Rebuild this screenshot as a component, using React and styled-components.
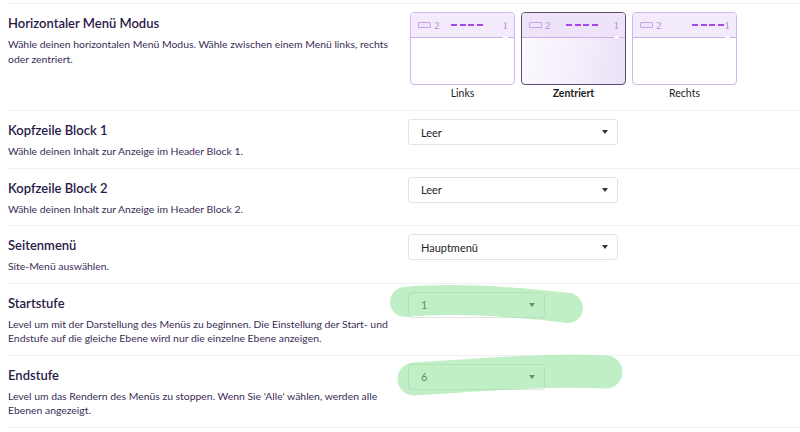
import React from 'react';
import styled, { createGlobalStyle } from 'styled-components';

const GlobalStyle = createGlobalStyle`
  body {
    margin: 0;
    background: #ffffff;
    font-family: 'Lato', 'Noto Sans', sans-serif;
  }
`;

const Page = styled.div`
  padding: 3px 0 0 8px;
`;

const Row = styled.div`
  display: grid;
  grid-template-columns: 400px 1fr;
  border-top: 1px solid #efefef;
  padding: 10px 0 ${(p) => p.$bottom || 9}px;

  &:last-child {
    border-bottom: 1px solid #efefef;
  }
`;

const Info = styled.div`
  display: flex;
  flex-direction: column;
`;

const Title = styled.div`
  font-size: 13px;
  line-height: 18px;
  font-weight: 600;
  color: #2a1a48;
`;

const Desc = styled.div`
  margin-top: 5px;
  font-size: 10.4px;
  line-height: 14.5px;
  color: #3a2c56;
`;

const Control = styled.div`
  position: relative;
  margin-top: -2px;
`;

const Select = styled.div`
  box-sizing: border-box;
  width: ${(p) => p.$width}px;
  height: 26px;
  border: 1px solid #e3e3e3;
  border-radius: 3px;
  display: flex;
  align-items: center;
  justify-content: space-between;
  padding: 0 9px 0 12px;
  font-size: 11px;
  color: #1e1e1e;
`;

const Caret = styled.span`
  width: 0;
  height: 0;
  border-left: 3.5px solid transparent;
  border-right: 3.5px solid transparent;
  border-top: 4px solid #333333;
`;

const Cards = styled.div`
  display: flex;
  gap: 6px;
  margin-left: 2px;
`;

const Option = styled.div`
  display: flex;
  flex-direction: column;
  align-items: center;
  width: 105px;
`;

const Card = styled.div`
  box-sizing: border-box;
  width: 105px;
  height: 73px;
  border: ${(p) => (p.$active ? '1.5px solid #5e4d70' : '1px solid #d2b6ee')};
  border-radius: 4px;
  overflow: hidden;
  display: flex;
  flex-direction: column;
  background: ${(p) =>
    p.$active ? 'linear-gradient(100deg, #fcfaff 0%, #f4eefb 55%, #ebe1f7 100%)' : '#ffffff'};
`;

const CardHeader = styled.div`
  position: relative;
  height: 24px;
  flex-shrink: 0;
  display: flex;
  align-items: center;
  padding: 0 6px 0 7px;
  background: ${(p) => (p.$active ? '#eee4f9' : '#f3ebfc')};
  border-bottom: 1px solid #cdaeea;

  &::after {
    content: '';
    position: absolute;
    right: 6px;
    bottom: -1px;
    width: 5px;
    height: 2px;
    background: #ffffff;
  }
`;

const BoxIcon = styled.span`
  box-sizing: border-box;
  width: 13px;
  height: 6px;
  border: 1px solid #c4a3e6;
  border-radius: 1px;
  background: #efe4fb;
`;

const Num = styled.span`
  font-family: 'Liberation Serif', 'DejaVu Serif', serif;
  font-size: 11px;
  color: #b18ad8;
  margin-left: ${(p) => p.$ml || 0}px;
`;

const DashArea = styled.div`
  flex: 1;
  display: flex;
  justify-content: ${(p) => p.$align};
  padding-left: ${(p) => (p.$align === 'flex-start' ? 11 : 0)}px;
  padding-right: ${(p) => (p.$align === 'flex-end' ? 1 : 0)}px;
`;

const Dashes = styled.span`
  width: 32px;
  height: 2px;
  background: repeating-linear-gradient(90deg, #a548e6 0 6px, transparent 6px 8.7px);
`;

const OptionLabel = styled.div`
  margin-top: 1px;
  font-size: 10.5px;
  line-height: 14px;
  color: #222222;
  font-weight: ${(p) => (p.$active ? 700 : 400)};
`;

const Highlight = styled.svg`
  position: absolute;
  left: ${(p) => p.$left}px;
  top: ${(p) => p.$top}px;
  pointer-events: none;
  overflow: visible;
`;

const modes = [
  { label: 'Links', align: 'flex-start' },
  { label: 'Zentriert', align: 'center', active: true },
  { label: 'Rechts', align: 'flex-end' },
];

const rows = [
  {
    title: 'Kopfzeile Block 1',
    desc: 'Wähle deinen Inhalt zur Anzeige im Header Block 1.',
    value: 'Leer',
    width: 210,
  },
  {
    title: 'Kopfzeile Block 2',
    desc: 'Wähle deinen Inhalt zur Anzeige im Header Block 2.',
    value: 'Leer',
    width: 210,
  },
  {
    title: 'Seitenmenü',
    desc: 'Site-Menü auswählen.',
    value: 'Hauptmenü',
    width: 210,
  },
  {
    title: 'Startstufe',
    desc: 'Level um mit der Darstellung des Menüs zu beginnen. Die Einstellung der Start- und Endstufe auf die gleiche Ebene wird nur die einzelne Ebene anzeigen.',
    value: '1',
    width: 137,
    mark: { left: -20, top: -8, d: 'M17 18 C 60 14, 120 17, 180 24', w: 30 },
  },
  {
    title: 'Endstufe',
    desc: "Level um das Rendern des Menüs zu stoppen. Wenn Sie 'Alle' wählen, werden alle Ebenen angezeigt.",
    value: '6',
    width: 137,
    mark: { left: -20, top: -15, d: 'M26 30 C 80 27, 150 20, 218 23', w: 33 },
  },
];

const App = () => {
  return (
    <>
      <GlobalStyle />
      <Page>
        <Row $bottom={10}>
          <Info>
            <Title>Horizontaler Menü Modus</Title>
            <Desc>
              Wähle deinen horizontalen Menü Modus. Wähle zwischen einem Menü links, rechts oder
              zentriert.
            </Desc>
          </Info>
          <Control>
            <Cards>
              {modes.map((m) => (
                <Option key={m.label}>
                  <Card $active={m.active}>
                    <CardHeader $active={m.active}>
                      <BoxIcon />
                      <Num $ml={3}>2</Num>
                      <DashArea $align={m.align}>
                        <Dashes />
                      </DashArea>
                      <Num>1</Num>
                    </CardHeader>
                  </Card>
                  <OptionLabel $active={m.active}>{m.label}</OptionLabel>
                </Option>
              ))}
            </Cards>
          </Control>
        </Row>
        {rows.map((r) => (
          <Row key={r.title}>
            <Info>
              <Title>{r.title}</Title>
              <Desc>{r.desc}</Desc>
            </Info>
            <Control>
              <Select $width={r.width}>
                <span>{r.value}</span>
                <Caret />
              </Select>
              {r.mark && (
                <Highlight $left={r.mark.left} $top={r.mark.top} width="240" height="50">
                  <path
                    d={r.mark.d}
                    fill="none"
                    stroke="rgba(140, 225, 150, 0.55)"
                    strokeWidth={r.mark.w}
                    strokeLinecap="round"
                  />
                </Highlight>
              )}
            </Control>
          </Row>
        ))}
      </Page>
    </>
  );
};

export default App;
